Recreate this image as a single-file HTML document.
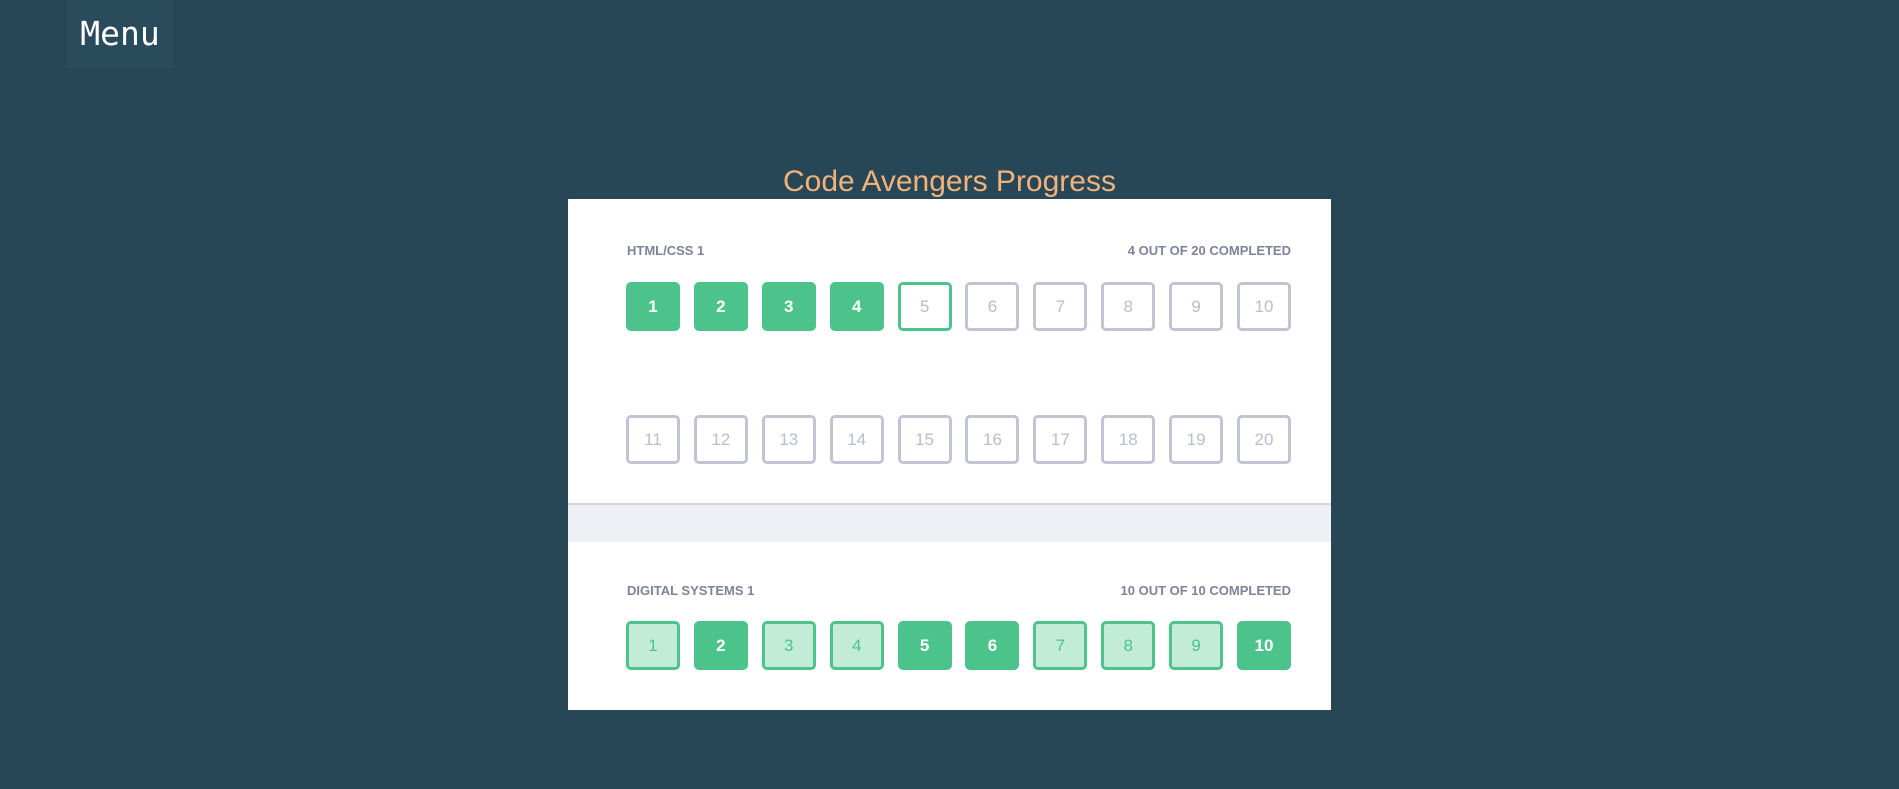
<!DOCTYPE html>
<html><head><meta charset="utf-8"><style>
html,body{margin:0;padding:0;width:1899px;height:789px;background:#274756;overflow:hidden;font-family:"Liberation Sans",sans-serif}
.menu{position:absolute;left:67px;top:0;width:106px;height:68px;background:#2a4b5b;color:#fff;font-family:"DejaVu Sans Mono","Liberation Mono",monospace;font-size:33px;line-height:68px;text-align:center}
.title{position:absolute;left:0;width:1899px;top:165px;text-align:center;color:#f2b27b;font-family:"Liberation Sans",sans-serif;font-size:30px}
.card{position:absolute;left:568px;top:199px;width:763px;height:511px;background:#fff}
.lbl{position:absolute;font-size:13px;font-weight:bold;color:#7d8399;letter-spacing:0}
.row{position:absolute;left:58px;display:flex;gap:13.9px}
.b{width:54px;height:49px;box-sizing:border-box;border-radius:5px;border:3px solid #c2c4d4;color:#b9bdcc;font-size:17px;display:flex;align-items:center;justify-content:center}
.g{background:#4bc38b;border-color:#4bc38b;color:#fff;font-weight:bold}
.o{border-color:#4bc38b}
.l{background:#c3ecd8;border-color:#4bc38b;color:#4bc38b}
.band{position:absolute;left:0;top:304px;width:763px;height:37px;background:#eff0f5;border-top:2px solid #d5d7e2}
</style></head><body>
<div class="menu">Menu</div>
<div class="title">Code Avengers Progress</div>
<div class="card">
<div class="lbl" style="left:59px;top:44px">HTML/CSS 1</div>
<div class="lbl" style="right:40px;top:44px">4 OUT OF 20 COMPLETED</div>
<div class="row" style="top:83px"><div class="b g">1</div><div class="b g">2</div><div class="b g">3</div><div class="b g">4</div><div class="b o">5</div><div class="b">6</div><div class="b">7</div><div class="b">8</div><div class="b">9</div><div class="b">10</div></div>
<div class="row" style="top:216px"><div class="b">11</div><div class="b">12</div><div class="b">13</div><div class="b">14</div><div class="b">15</div><div class="b">16</div><div class="b">17</div><div class="b">18</div><div class="b">19</div><div class="b">20</div></div>
<div class="band"></div>
<div class="lbl" style="left:59px;top:384px">DIGITAL SYSTEMS 1</div>
<div class="lbl" style="right:40px;top:384px">10 OUT OF 10 COMPLETED</div>
<div class="row" style="top:422px"><div class="b l">1</div><div class="b g">2</div><div class="b l">3</div><div class="b l">4</div><div class="b g">5</div><div class="b g">6</div><div class="b l">7</div><div class="b l">8</div><div class="b l">9</div><div class="b g">10</div></div>
</div>
</body></html>
